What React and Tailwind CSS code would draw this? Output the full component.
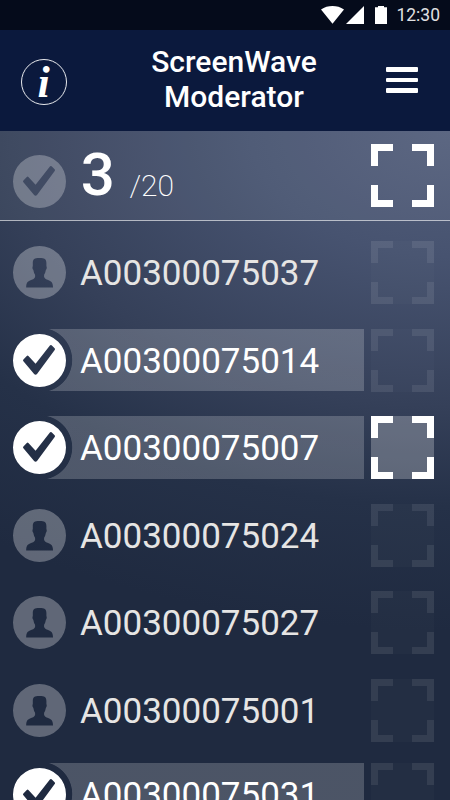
import React from "react";

const rows = [
  { id: "A00300075037" },
  { id: "A00300075014", checked: true },
  { id: "A00300075007", checked: true, active: true },
  { id: "A00300075024" },
  { id: "A00300075027" },
  { id: "A00300075001", last: true },
  { id: "A00300075031", checked: true },
];

function Frame({ className = "", active }) {
  return (
    <svg viewBox="0 0 63 63" className={`h-[63px] w-[63px] shrink-0 ${className}`}>
      {active && <rect width="63" height="63" fill="#fff" fillOpacity=".25" />}
      <path
        fill="currentColor"
        d="M0 0h22v7H7v15H0zM41 0h22v22h-7V7H41zM0 41h7v15h15v7H0zM56 41h7v22H41v-7h15z"
      />
    </svg>
  );
}

const tick =
  "M10.4 25.4L13.8 21.9Q14.6 21.1 15.4 21.9L22.6 29.8L36.9 11.4Q37.7 10.5 38.6 11.3L41.6 14.3Q42.4 15.1 41.7 16.1L24.2 39.8Q22.6 41.6 20.9 39.8L10.4 27.2Q9.6 26.3 10.4 25.4Z";

function Check({ dim }) {
  return (
    <svg viewBox="0 0 53 53" className="h-[53px] w-[53px] shrink-0">
      <path
        fill="#fff"
        fillOpacity={dim ? 0.27 : 1}
        fillRule="evenodd"
        d={"M26.5 0a26.5 26.5 0 1 1 0 53a26.5 26.5 0 1 1 0-53z" + tick}
      />
    </svg>
  );
}

function Person() {
  return (
    <svg viewBox="0 0 53 53" className="h-[53px] w-[53px] shrink-0">
      <path
        fill="#fff"
        fillOpacity=".29"
        fillRule="evenodd"
        d="M26.5 0a26.5 26.5 0 1 1 0 53a26.5 26.5 0 1 1 0-53zM26.5 12C21.3 12 19.8 13.3 19.8 17V20.3C19.2 20.6 19.4 23.4 20.3 23.8C20.8 26 21.2 27.6 22.1 28.8V31C21.3 33 19.5 33.5 17 34.5C14.3 35.6 13.2 37.2 13.2 41.4H40C40 37.2 38.7 35.6 36.2 34.5C33.7 33.5 31.9 33 31.1 31V28.8C32 27.6 32.4 26 32.9 23.8C33.8 23.4 34 20.6 33.4 20.3V17C33.4 13.3 31.7 12 26.5 12z"
      />
    </svg>
  );
}

function Row({ row }) {
  return (
    <div className={`flex h-[87.5px] shrink-0 items-center pl-[13.3px] ${row.last ? "-mb-[3.5px]" : ""}`}>
      <div className="flex h-[62.5px] w-[350.7px] shrink-0 items-center">
        {row.checked ? <Check /> : <Person />}
        <div
          className={`-ml-[26px] flex h-[62.5px] w-[324px] items-center pl-[39.7px] pt-[2px] text-[35px] leading-none ${
            row.checked
              ? "bg-[radial-gradient(circle_at_0px_50%,transparent_31.8px,rgba(255,255,255,0.2)_32.6px)] text-white"
              : "text-[#e6e5e4]"
          }`}
        >
          {row.id}
        </div>
      </div>
      <Frame
        active={row.active}
        className={`ml-[7px] ${row.active ? "text-white" : "bg-white/[0.02] text-white/[0.08]"}`}
      />
    </div>
  );
}

export default function App() {
  return (
    <div className="flex h-[800px] w-[450px] flex-col overflow-hidden bg-[#1d273b] font-['Roboto',sans-serif] text-white">
      <div className="flex h-[30px] shrink-0 items-center justify-end bg-[#050b1b] pr-[10px]">
        <svg viewBox="0 0 66 18" className="mr-[9px] h-[18px] w-[66px]" fill="#fff">
          <path d="M0 3.4C6.8-1.1 16.2-1.1 23 3.4L11.5 17.8zM43 0V18H25zM54 1.2H57V0H63V1.2H66V18H54z" />
        </svg>
        <span className="pt-[2px] text-[17.5px] leading-none text-[#e0e0e2]">12:30</span>
      </div>

      <header className="flex h-[101px] shrink-0 items-center justify-between bg-[#0b193d] pl-[21px] pr-[32px]">
        <div className="mt-[3px] flex h-[46px] w-[46px] items-center justify-center rounded-full border-[1.5px] border-white/90 font-['Liberation_Serif',serif] text-[44px] font-bold italic leading-none">
          <span className="ml-[-1px] mt-[1px]">i</span>
        </div>
        <h1 className="-mt-[3px] ml-[15px] text-center text-[30px] font-medium leading-[35px]">
          ScreenWave
          <br />
          Moderator
        </h1>
        <div className="-mt-[1px] flex w-8 flex-col gap-[6px]">
          <span className="h-[4.5px] rounded-[1px] bg-white" />
          <span className="h-[4.5px] rounded-[1px] bg-white" />
          <span className="h-[4.5px] rounded-[1px] bg-white" />
        </div>
      </header>

      <main className="flex h-[669px] shrink-0 flex-col overflow-hidden bg-[radial-gradient(ellipse_800px_500px_at_100%_0%,#535f7b_0%,#475370_25%,#354059_55%,#253148_75%,#1f2a40_100%)]">
        <section className="flex h-[89.5px] shrink-0 items-center border-b border-white/60 bg-white/[0.05] pl-[13.3px] pr-4">
          <div className="pt-[12px]">
            <Check dim />
          </div>
          <span className="ml-[14.5px] text-[60px] font-medium leading-none">3</span>
          <span className="ml-[14.5px] pt-[22px] text-[30px] font-extralight leading-none">/20</span>
          <Frame className="ml-auto" />
        </section>
        <div className="flex flex-col pt-[8.3px]">
          {rows.map((row) => (
            <Row key={row.id} row={row} />
          ))}
        </div>
      </main>
    </div>
  );
}
